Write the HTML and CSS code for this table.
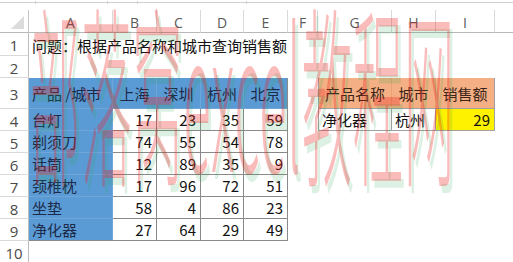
FILE: index.html
```html
<!DOCTYPE html>
<html lang="zh">
<head>
<meta charset="utf-8">
<link rel="stylesheet" href="styles.css">
</head>
<body>
<div class="topbar"><span class="tick t1"></span><span class="tick t2"></span><span class="tick t3"></span><span class="tick t4"></span></div>
<div class="sheet">
  <div class="corner"><span class="tri"></span></div>
  <div class="ch">A</div><div class="ch">B</div><div class="ch">C</div><div class="ch">D</div><div class="ch">E</div><div class="ch">F</div><div class="ch">G</div><div class="ch">H</div><div class="ch">I</div><div class="ch rest"></div>

  <div class="rh">1</div>
  <div class="c title">问题：根据产品名称和城市查询销售额</div>

  <div class="rh">2</div>
  <div class="c span10"></div>

  <div class="rh">3</div>
  <div class="c blue">产品 /城市</div><div class="c blue ctr">上海</div><div class="c blue ctr">深圳</div><div class="c blue ctr">杭州</div><div class="c blue ctr last">北京</div>
  <div class="c"></div>
  <div class="c org first">产品名称</div><div class="c org">城市</div><div class="c org lastc">销售额</div><div class="c"></div>

  <div class="rh">4</div>
  <div class="c blue">台灯</div><div class="c num">17</div><div class="c num">23</div><div class="c num">35</div><div class="c num last">59</div>
  <div class="c"></div>
  <div class="c res first">净化器</div><div class="c res">杭州</div><div class="c res yel">29</div><div class="c"></div>

  <div class="rh">5</div>
  <div class="c blue">剃须刀</div><div class="c num">74</div><div class="c num">55</div><div class="c num">54</div><div class="c num last">78</div>
  <div class="c span5"></div>

  <div class="rh">6</div>
  <div class="c blue">话筒</div><div class="c num">12</div><div class="c num">89</div><div class="c num">35</div><div class="c num last">9</div>
  <div class="c span5"></div>

  <div class="rh">7</div>
  <div class="c blue">颈椎枕</div><div class="c num">17</div><div class="c num">96</div><div class="c num">72</div><div class="c num last">51</div>
  <div class="c span5"></div>

  <div class="rh">8</div>
  <div class="c blue">坐垫</div><div class="c num">58</div><div class="c num">4</div><div class="c num">86</div><div class="c num last">23</div>
  <div class="c span5"></div>

  <div class="rh">9</div>
  <div class="c blue bot">净化器</div><div class="c num bot">27</div><div class="c num bot">64</div><div class="c num bot">29</div><div class="c num last bot">49</div>
  <div class="c span5"></div>

  <div class="rh">10</div>
  <div class="c span10"></div>
</div>
<div class="watermark" aria-hidden="true">部落窝excel教程网</div>
</body>
</html>
```
FILE: styles.css
```css
html, body {
  margin: 0;
  padding: 0;
  background: #fff;
  width: 513px;
  height: 262px;
  overflow: hidden;
  position: relative;
  font-family: "Noto Sans CJK SC", "Noto Sans", sans-serif;
}
.topbar {
  height: 9px;
  position: relative;
  border-top: 1px solid #fff;
}
.topbar::before {
  content: "";
  display: block;
  height: 1px;
  background: #cfcfcf;
  margin-top: 1px;
}
.tick {
  position: absolute;
  top: 0;
  width: 1px;
  height: 3px;
  background: #cfcfcf;
}
.t1 { left: 35px; }
.t2 { left: 107px; }
.t3 { left: 137px; }
.t4 { left: 246px; }

.sheet {
  display: grid;
  grid-template-columns: 29px 84px 44px 44px 43px 44px 30px 74px 44px 59px 18px;
  grid-template-rows: 23px 23px 22px 31px 22px 22px 22px 22px 22px 22px 22px;
}
.corner {
  border-right: 1px solid #c6c6c6;
  border-bottom: 1px solid #b8b8b8;
  position: relative;
  box-sizing: border-box;
}
.tri {
  position: absolute;
  right: 4px;
  bottom: 3px;
  width: 0;
  height: 0;
  border-left: 13px solid transparent;
  border-bottom: 13px solid #dcdcdc;
}
.ch {
  box-sizing: border-box;
  border-right: 1px solid #dadada;
  border-bottom: 1px solid #b8b8b8;
  font-family: "Open Sans", "Noto Sans", sans-serif;
  font-size: 14px;
  color: #5a5a5a;
  display: flex;
  align-items: center;
  justify-content: center;
  padding-top: 3px;
}
.ch.rest { border-right: none; }
.rh {
  box-sizing: border-box;
  border-right: 1px solid #bdbdbd;
  border-bottom: 1px solid #dadada;
  font-family: "Open Sans", "Noto Sans", sans-serif;
  font-size: 15px;
  color: #4a4a4a;
  display: flex;
  align-items: center;
  justify-content: center;
  padding-top: 2px;
}
.c {
  box-sizing: border-box;
  font-size: 15px;
  color: #111;
  display: flex;
  align-items: center;
  padding: 0 3px;
  white-space: nowrap;
  min-width: 0;
}
.title {
  grid-column: span 10;
  padding-top: 1px;
}
.span10 { grid-column: span 10; }
.span5 { grid-column: span 5; }
.blue {
  background: #5b9bd5;
  color: #1b2a48;
  border-right: 1px solid #6fa5d8;
  border-bottom: 1px solid #6fa5d8;
}
.blue.ctr { justify-content: center; }
.blue.last { border-right: 1px solid #8a8a8a; }
.num {
  justify-content: flex-end;
  border-right: 1px solid #8a8a8a;
  border-bottom: 1px solid #8a8a8a;
  padding-right: 4px;
  color: #111;
}
.bot { border-bottom: 1px solid #8a8a8a; }
.org {
  background: #f4b084;
  color: #3a2418;
  justify-content: center;
  border-right: 1px solid #eaa172;
  border-bottom: 1px solid #a0a0a0;
}
.first { border-left: 1px solid #a0a0a0; }
.org.lastc { border-right: 1px solid #a0a0a0; }
.res {
  border-right: 1px solid #a0a0a0;
  border-bottom: 1px solid #a0a0a0;
}
.yel {
  background: #fff200;
  justify-content: flex-end;
  padding-right: 4px;
}
.watermark {
  position: absolute;
  left: 30px;
  top: -8px;
  font-family: "Noto Sans CJK SC", sans-serif;
  font-weight: 300;
  font-size: 54px;
  line-height: 54px;
  letter-spacing: 1px;
  color: rgba(240, 30, 30, 0.3);
  text-shadow: 3px 2px 0 rgba(40, 170, 80, 0.16);
  transform: scale(0.93, 3.6);
  transform-origin: top left;
  white-space: nowrap;
  pointer-events: none;
}
```
